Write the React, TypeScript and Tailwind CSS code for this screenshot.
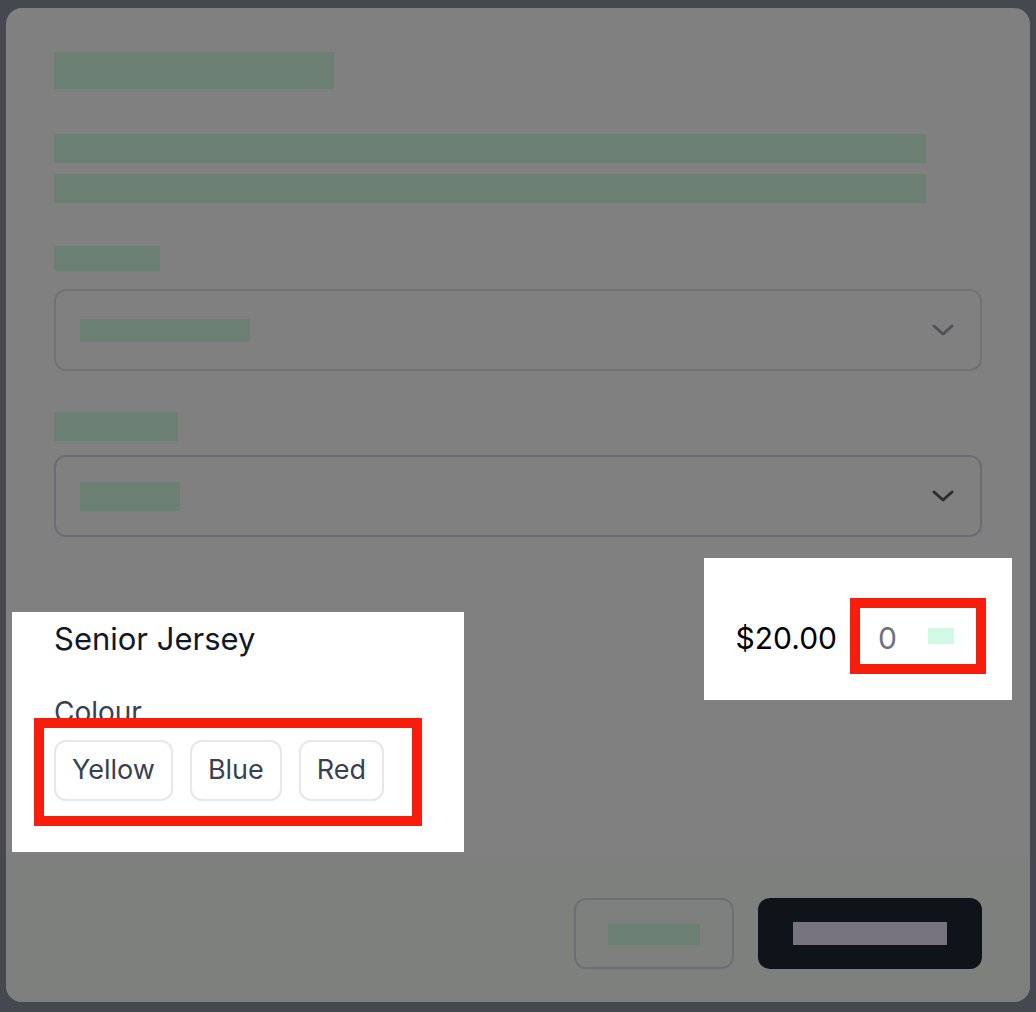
import React from "react";

const FONT = { fontFamily: "Inter, 'Noto Sans', sans-serif" };

// placeholder bar standing in for redacted text
function Bar({ className }: { className: string }) {
  return <div className={`bg-[#6b8073] ${className}`} />;
}

function Chevron({ dark }: { dark?: boolean }) {
  return (
    <svg width="22" height="12" viewBox="0 0 22 12" fill="none" className="shrink-0">
      <path
        d="M2 2 L11 10 L20 2"
        stroke={dark ? "#2c2d33" : "#515157"}
        strokeWidth="3"
        strokeLinecap="round"
        strokeLinejoin="round"
      />
    </svg>
  );
}

function SelectBox({ barWidth, barHeight, dark }: { barWidth: string; barHeight: string; dark?: boolean }) {
  return (
    <div
      className={`h-[82px] rounded-xl border-2 flex items-center justify-between pl-[24px] pr-[26px] ${
        dark ? "border-[#6d6c75]" : "border-[#727176]"
      }`}
    >
      <Bar className={`${barWidth} ${barHeight}`} />
      <Chevron dark={dark} />
    </div>
  );
}

const COLOURS = ["Yellow", "Blue", "Red"];

export default function App() {
  return (
    <div className="w-[1036px] h-[1012px] bg-[#45484e] pt-2 pl-[6px]" style={FONT}>
      <div className="w-[1024px] h-[994px] rounded-2xl bg-[#808080] flex flex-col overflow-hidden">
        <div className="px-12 pt-11 flex flex-col">
          <Bar className="w-[280px] h-[37px]" />
          <Bar className="mt-[45px] w-[872px] h-[29px]" />
          <Bar className="mt-[11px] w-[872px] h-[29px]" />

          <Bar className="mt-[43px] w-[106px] h-[25px]" />
          <div className="mt-[18px]">
            <SelectBox barWidth="w-[170px]" barHeight="h-[23px]" />
          </div>

          <Bar className="mt-[41px] w-[124px] h-[29px]" />
          <div className="mt-[14px]">
            <SelectBox barWidth="w-[100px]" barHeight="h-[29px]" dark />
          </div>

          <div className="flex justify-between items-start">
            {/* product + colour options */}
            <div className="-ml-[42px] mt-[75px] w-[452px] h-[240px] bg-white pl-[42px] pt-[9px] flex flex-col">
              <div className="text-[31px] leading-[36px] text-[#111827]">Senior Jersey</div>
              <div className="mt-[37px] text-[28px] leading-[36px] text-[#374151]">Colour</div>
              <div className="relative -ml-[20px] -mt-[12px] w-[388px] h-[108px] border-[10px] border-[#f81c0c] flex gap-[17px] pl-[10px] pt-[12px]">
                {COLOURS.map((c) => (
                  <button
                    key={c}
                    className="h-[61px] px-[16px] rounded-xl border-2 border-[#e5e7eb] bg-white text-[27px] text-[#374151]"
                  >
                    {c}
                  </button>
                ))}
              </div>
            </div>

            {/* price + quantity */}
            <div className="-mr-[30px] mt-[21px] bg-white flex items-center pl-8 pr-[26px] pt-10 pb-[26px]">
              <span className="text-[30px] leading-[36px] text-black mr-[13px] mt-[3px]">$20.00</span>
              <div className="w-[136px] h-[76px] border-[10px] border-[#f81c0c] flex items-center pl-[18px] pr-[22px]">
                <span className="text-[30px] leading-[36px] text-[#6b7280] mt-[3px]">0</span>
                <span className="ml-auto w-[26px] h-[16px] bg-[#d1fae5]" />
              </div>
            </div>
          </div>
        </div>

        <div className="mt-1 flex-1 bg-[#7e807e] flex justify-end items-start gap-6 px-12 pt-[42px]">
          <button className="w-[160px] h-[71px] rounded-xl border-2 border-[#6f6e76] flex items-center justify-center">
            <Bar className="w-[92px] h-[21px] mt-[2px]" />
          </button>
          <button className="w-[224px] h-[71px] rounded-xl bg-[#0f131a] flex items-center justify-center">
            <div className="w-[154px] h-[23px] bg-[#77737f]" />
          </button>
        </div>
      </div>
    </div>
  );
}
